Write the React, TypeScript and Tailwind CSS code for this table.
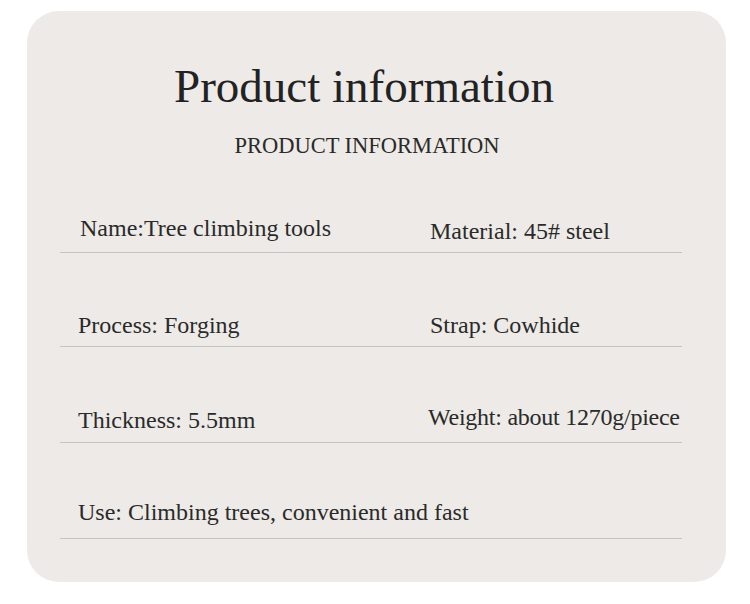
type Row = { left: string; right?: string; h: string; lx?: string; rx?: string; lpb?: string; rpb?: string };

const rows: Row[] = [
  { left: "Name:Tree climbing tools", right: "Material: 45# steel", h: "h-[55px]", lx: "pl-[20px]", lpb: "mb-[3px]" },
  { left: "Process: Forging", right: "Strap: Cowhide", h: "h-[94px]" },
  { left: "Thickness: 5.5mm", right: "Weight: about 1270g/piece", h: "h-[96px]", rx: "pl-0 tracking-[-0.25px]", lpb: "mb-[1px]", rpb: "mb-[4px]" },
  { left: "Use: Climbing trees, convenient and fast", h: "h-[96px]", lpb: "mb-[5px]" },
];

const App = () => {
  return (
    <div
      className="min-h-screen bg-white pt-[11px] pl-[27px]"
      style={{ fontFamily: '"Liberation Serif", "DejaVu Serif", serif' }}
    >
      <div className="w-[699px] h-[571px] rounded-[32px] bg-[#edeae7] pl-[33px] pr-[44px] pt-[47px]">
        {/* Header */}
        <div className="text-center pr-[14px]">
          <h1 className="text-[47px] leading-[56px] text-[#222]">Product information</h1>
          <p className="mt-[17px] pl-[6px] text-[22.5px] leading-[30px] text-[#2a2a2a]">PRODUCT INFORMATION</p>
        </div>

        {/* Spec rows */}
        <div className="mt-[37px]">
          {rows.map((r, i) => (
            <div
              key={i}
              className={`grid grid-cols-[368px_1fr] items-end border-b border-[#c6c4c1] text-[24px] leading-[28px] text-[#2a2a2a] pb-[7px] ${r.h}`}
            >
              <span className={`${r.lx ?? "pl-[18px]"} ${r.lpb ?? ""} ${r.right ? "" : "col-span-2"} whitespace-nowrap`}>
                {r.left}
              </span>
              {r.right && (
                <span className={`${r.rx ?? "pl-[2px]"} ${r.rpb ?? ""} whitespace-nowrap`}>{r.right}</span>
              )}
            </div>
          ))}
        </div>
      </div>
    </div>
  );
};

export default App;
